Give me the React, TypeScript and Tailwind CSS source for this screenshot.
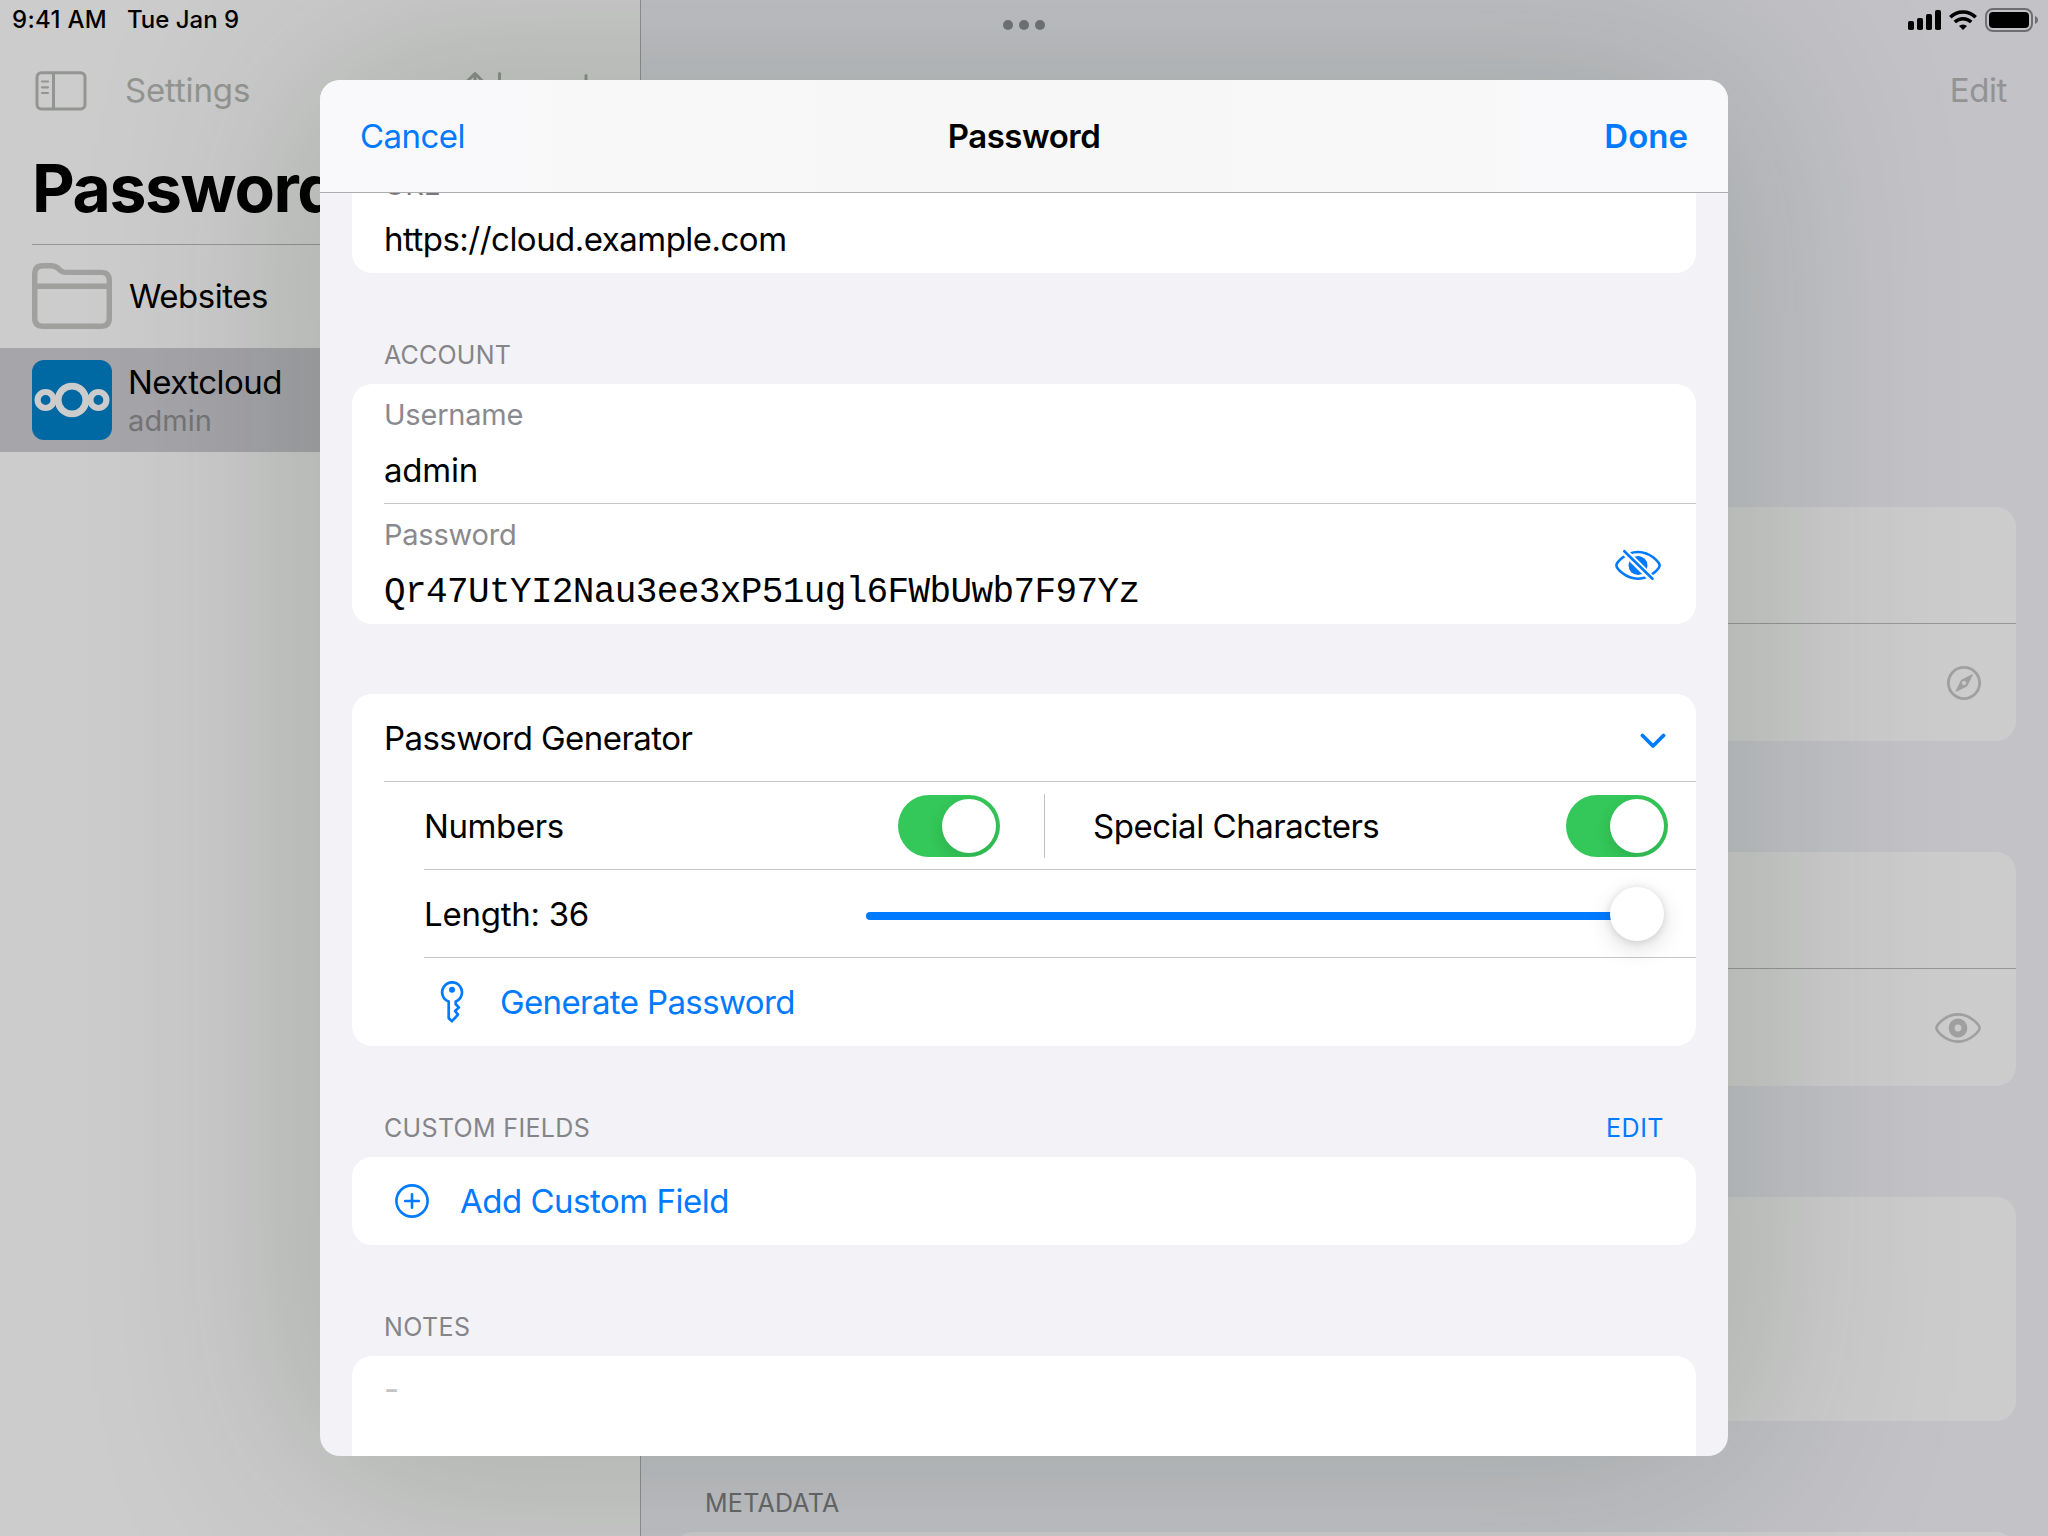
import type { ReactNode } from "react";

/* ---------- icons ---------- */

function SidebarIcon() {
  return (
    <svg width="52" height="40" viewBox="0 0 52 40" fill="none" stroke="#939592" strokeWidth="3">
      <rect x="2" y="1.7" width="48" height="36.4" rx="4.5" />
      <path d="M18.5 2v36" />
      <path d="M7 10.5h6M7 16.3h6M7 22h6" strokeWidth="2.2" strokeLinecap="round" />
    </svg>
  );
}

function SortIcon() {
  return (
    <svg width="44" height="40" viewBox="0 0 44 40" fill="none" stroke="#8e918d" strokeWidth="3" strokeLinecap="round" strokeLinejoin="round">
      <path d="M11 2.5v34M2 11.5l9-9 9 9M35.5 2.5v34M26.5 28l9 9 9-9" />
    </svg>
  );
}

function PlusIcon() {
  return (
    <svg width="36" height="36" viewBox="0 0 36 36" fill="none" stroke="#8e918d" strokeWidth="3" strokeLinecap="round">
      <path d="M18 2.5v31M2.5 18h31" />
    </svg>
  );
}

function FolderIcon() {
  return (
    <svg className="-mt-0.5" width="80" height="66" viewBox="0 0 80 66" fill="none" stroke="#a0a09f" strokeWidth="5.4" strokeLinejoin="round">
      <path d="M2.7 11.5Q2.7 2.7 10.5 2.7H19c4 0 5.5 1 8 3.4l1.6 1.5C30.5 9.2 31.8 9.4 34 9.4H69Q77.3 9.4 77.3 17.5V55Q77.3 63.3 69 63.3H11Q2.7 63.3 2.7 55Z" />
      <path d="M3 23.2H77" />
    </svg>
  );
}

function NextcloudIcon() {
  return (
    <div className="flex h-20 w-20 items-center justify-center rounded-xl bg-[#0069a3]">
      <svg width="80" height="80" viewBox="0 0 80 80" fill="none" stroke="#cccccc">
        <circle cx="40" cy="40" r="13.9" strokeWidth="6.8" />
        <circle cx="13.6" cy="40" r="8" strokeWidth="6.2" />
        <circle cx="66.4" cy="40" r="8" strokeWidth="6.2" />
      </svg>
    </div>
  );
}

function SignalIcon() {
  return (
    <svg width="33" height="20" viewBox="0 0 33 20" fill="#000">
      <rect x="0" y="11" width="6" height="9" rx="1.8" />
      <rect x="9" y="8" width="6" height="12" rx="1.8" />
      <rect x="18" y="4" width="6" height="16" rx="1.8" />
      <rect x="27" y="0" width="6" height="20" rx="1.8" />
    </svg>
  );
}

function WifiIcon() {
  return (
    <svg width="28" height="20" viewBox="0 0 28 20" fill="none" stroke="#000" strokeWidth="3.5">
      <path d="M1.3 7.2A18 18 0 0 1 26.7 7.2" />
      <path d="M5.8 12A11.8 11.8 0 0 1 22.2 12" />
      <path d="M10 16.1A5.6 5.6 0 0 1 18 16.1L14 20Z" fill="#000" stroke="none" />
    </svg>
  );
}

function BatteryIcon() {
  return (
    <svg width="54" height="24" viewBox="0 0 54 24">
      <rect x="1" y="1" width="46" height="22" rx="7" fill="none" stroke="#6f6f72" strokeWidth="2" />
      <rect x="4" y="4" width="40" height="16" rx="4" fill="#000" />
      <path d="M50 8c1.9.7 3 2.2 3 4s-1.1 3.3-3 4Z" fill="#6f6f72" />
    </svg>
  );
}

function CompassIcon() {
  return (
    <svg width="34" height="34" viewBox="0 0 34 34" fill="none">
      <circle cx="17" cy="17" r="15.6" stroke="#a0a0a0" strokeWidth="2.8" />
      <path fillRule="evenodd" fill="#a0a0a0" d="M25.2 8.3q1-.3.6.7L20.6 19.6q-.4.7-1 1.1L9.2 25.7q-.9.3-.6-.6L13.8 14.4q.4-.7 1-1ZM17 15a2 2 0 1 0 0 4a2 2 0 1 0 0-4Z" />
    </svg>
  );
}

function EyeIcon() {
  return (
    <svg width="46" height="30" viewBox="0 0 46 30" fill="none">
      <path d="M1.4 15C1.4 12.5 10 1.4 23 1.4S44.6 12.5 44.6 15 36 28.6 23 28.6 1.4 17.5 1.4 15Z" stroke="#a0a0a0" strokeWidth="2.6" />
      <circle cx="23" cy="15" r="6.4" stroke="#a0a0a0" strokeWidth="6" />
    </svg>
  );
}

function EyeSlashIcon() {
  return (
    <svg className="mt-px" width="46" height="32" viewBox="0 0 46 32" fill="none">
      <path d="M1.4 16.5C1.4 14 10 3 23 3S44.6 14 44.6 16.5 36 29.8 23 29.8 1.4 19 1.4 16.5Z" stroke="#007aff" strokeWidth="2.6" />
      <circle cx="23" cy="16.5" r="9.5" fill="#007aff" />
      <path d="M8.5 1.5L37.5 30.5" stroke="#fff" strokeWidth="7" />
      <path d="M9.3 2.2L37.5 29.8" stroke="#007aff" strokeWidth="2.6" strokeLinecap="round" />
    </svg>
  );
}

function ChevronDownIcon() {
  return (
    <svg className="mt-1.5" width="26" height="16" viewBox="0 0 26 16" fill="none" stroke="#007aff" strokeWidth="3.8" strokeLinecap="round" strokeLinejoin="round">
      <path d="M2.5 2.5L13 13L23.5 2.5" />
    </svg>
  );
}

function KeyIcon() {
  return (
    <svg width="24" height="44" viewBox="0 0 24 44" fill="none" stroke="#007aff" strokeWidth="2.7" strokeLinejoin="round">
      <path d="M8.7 21.6A9.9 9.9 0 1 1 15.7 21.5V24.3L18.9 27.4L15.1 31L18 34.6L12 41.2L8.7 38.2Z" />
      <circle cx="12" cy="9.7" r="3" fill="#007aff" stroke="none" />
    </svg>
  );
}

function PlusCircleIcon() {
  return (
    <svg width="34" height="34" viewBox="0 0 34 34" fill="none" stroke="#007aff" strokeWidth="2.6" strokeLinecap="round">
      <circle cx="17" cy="17" r="15.6" />
      <path d="M17 10.2v13.6M10.2 17h13.6" />
    </svg>
  );
}

/* ---------- background: status bar, list, details ---------- */

function StatusBar() {
  return (
    <div className="absolute inset-x-0 top-0 flex h-10 items-center pl-3 pr-[9px] text-[24px] font-medium">
      <span className="tracking-[0.3px]">9:41 AM</span>
      <span className="ml-5">Tue Jan 9</span>
      <div className="absolute left-1/2 top-5 flex -translate-x-1/2 gap-1.5">
        <i className="size-2.5 rounded-full bg-[#737577]" />
        <i className="size-2.5 rounded-full bg-[#737577]" />
        <i className="size-2.5 rounded-full bg-[#737577]" />
      </div>
      <div className="ml-auto flex items-center gap-2">
        <SignalIcon />
        <WifiIcon />
        <BatteryIcon />
      </div>
    </div>
  );
}

function Sidebar() {
  return (
    <aside className="flex w-[641px] shrink-0 flex-col border-r border-[#8f9291] bg-[#cccccc]">
      <div className="mt-[51px] flex h-20 items-center pl-[35px] pr-9">
        <SidebarIcon />
        <span className="ml-[38px] text-[33px] tracking-[-0.15px] text-[#939592]">Settings</span>
        <div className="ml-auto flex items-center gap-[60px]">
          <SortIcon />
          <PlusIcon />
        </div>
      </div>
      <div className="ml-8 flex h-[114px] items-center border-b border-[#959795] pt-0.5 text-[66px] font-bold tracking-[-1.4px]">Passwords</div>
      <div className="flex h-[103px] items-center pl-8">
        <FolderIcon />
        <span className="ml-[17px] text-[33px] tracking-[-0.5px]">Websites</span>
      </div>
      <div className="flex h-[104px] items-center bg-[#a6a5aa] pl-8">
        <NextcloudIcon />
        <div className="ml-4 pt-0.5">
          <div className="h-10 text-[33px] leading-10 tracking-[-0.55px]">Nextcloud</div>
          <div className="h-[38px] text-[29px] leading-[38px] tracking-[0.1px] text-[#757578]">admin</div>
        </div>
      </div>
    </aside>
  );
}

function DetailCard({ height, icon }: { height: string; icon?: ReactNode }) {
  return (
    <div className={`flex shrink-0 flex-col rounded-[20px] bg-[#cccccc] ${height}`}>
      {icon && (
        <>
          <div className="ml-8 h-[117px] shrink-0 border-b border-[#97979a]" />
          <div className="flex flex-1 items-center justify-end pr-[35px]">{icon}</div>
        </>
      )}
    </div>
  );
}

function Detail() {
  return (
    <main className="flex flex-1 flex-col bg-[#c2c2c7]">
      <div className="mt-[51px] flex h-20 shrink-0 items-center justify-end pr-[41px] text-[33px] tracking-[-0.4px] text-[#939396]">Edit</div>
      <div className="mx-8 mt-[376px] flex shrink-0 flex-col">
        <DetailCard height="h-[234px]" icon={<CompassIcon />} />
        <div className="h-[111px] shrink-0" />
        <DetailCard height="h-[234px]" icon={<EyeIcon />} />
        <div className="h-[111px] shrink-0" />
        <DetailCard height="h-[224px]" />
        <div className="flex h-[111px] shrink-0 flex-col justify-end pb-3 pl-8 text-[25px] leading-[34px] tracking-[0.26px] text-[#68686b]">METADATA</div>
        <DetailCard height="h-[100px]" />
      </div>
    </main>
  );
}

/* ---------- modal ---------- */

function Toggle() {
  return (
    <div className="flex h-[62px] w-[102px] items-center justify-end overflow-hidden rounded-full bg-[#34c759] pr-1">
      <div className="size-[54px] rounded-full bg-white shadow-[0_6px_16px_rgba(0,0,0,0.12)]" />
    </div>
  );
}

function SectionHeader({ title, action, spacing = "tracking-[0.2px]" }: { title: string; action?: string; spacing?: string }) {
  return (
    <div className="flex h-[111px] shrink-0 items-end justify-between px-8 pb-3 text-[25px] leading-[34px] text-[#858589]">
      <span className={spacing}>{title}</span>
      {action && <span className="tracking-[0.5px] text-[#007aff]">{action}</span>}
    </div>
  );
}

function Field({
  label,
  children,
  className = "",
  labelClass = "pt-0 text-[#8a8a8e]",
}: {
  label: string;
  children: ReactNode;
  className?: string;
  labelClass?: string;
}) {
  return (
    <div className={`flex h-[120px] flex-1 flex-col pt-3 ${className}`}>
      <div className={`h-[38px] text-[29px] leading-[38px] tracking-[-0.22px] ${labelClass}`}>{label}</div>
      <div className="mt-4 h-10 leading-10">{children}</div>
    </div>
  );
}

function Card({ children, className = "" }: { children?: ReactNode; className?: string }) {
  return <section className={`shrink-0 rounded-[20px] bg-white ${className}`}>{children}</section>;
}

function Modal() {
  return (
    <div className="absolute inset-0 flex items-center justify-center">
      <div className="flex h-[1376px] w-[1408px] flex-col overflow-hidden rounded-[20px] bg-[#f2f2f7] text-[33px] shadow-[0_0_220px_20px_rgba(5,32,8,0.18)]">
        <header className="grid h-[113px] shrink-0 grid-cols-3 items-center border-b border-[#adadb0] bg-linear-to-r from-[#f9f9fb] via-[#f7f7f7] to-[#f9f9fb] px-10 pt-0.5">
          <span className="tracking-[-0.55px] text-[#007aff]">Cancel</span>
          <span className="text-center font-semibold tracking-[-0.47px]">Password</span>
          <span className="text-right font-semibold text-[#007aff]">Done</span>
        </header>

        <div className="flex min-h-0 flex-1 flex-col overflow-hidden px-8">
          <Card className="-mt-10 flex px-8">
            <Field label="URL" labelClass="pt-px text-[#77777c]">
              <span className="tracking-[-0.52px]">https://cloud.example.com</span>
            </Field>
          </Card>

          <SectionHeader title="ACCOUNT" />
          <Card className="pl-8">
            <Field label="Username" className="border-b border-[#c6c6c8]">
              <span className="tracking-[-0.2px]">admin</span>
            </Field>
            <div className="flex items-center pr-[35px]">
              <Field label="Password">
                <span className="font-['Liberation_Mono',monospace] text-[36px] tracking-[-0.62px]">Qr47UtYI2Nau3ee3xP51ugl6FWbUwb7F97Yz</span>
              </Field>
              <EyeSlashIcon />
            </div>
          </Card>

          <Card className="mt-[70px] h-[352px]">
            <div className="ml-8 flex h-[88px] items-center justify-between border-b border-[#c6c6c8] pr-[30px]">
              <span className="mt-0.5 tracking-[-0.55px]">Password Generator</span>
              <ChevronDownIcon />
            </div>
            <div className="ml-[72px] flex h-[88px] items-center border-b border-[#c6c6c8] pr-7">
              <div className="flex w-[620px] items-center justify-between pr-11">
                <span className="mt-0.5 tracking-[-0.4px]">Numbers</span>
                <Toggle />
              </div>
              <div className="h-16 w-px bg-[#c0c0c2]" />
              <div className="flex flex-1 items-center justify-between pl-12">
                <span className="mt-0.5 tracking-[-0.47px]">Special Characters</span>
                <Toggle />
              </div>
            </div>
            <div className="ml-[72px] flex h-[88px] items-center justify-between border-b border-[#c6c6c8] pr-8">
              <span className="mt-0.5 tracking-[-0.25px]">Length: 36</span>
              <div className="relative flex h-[54px] w-[798px] items-center">
                <div className="mt-[5px] h-2 w-[770px] rounded-full bg-[#007aff]" />
                <div className="absolute right-0 top-0 size-[54px] rounded-full bg-white shadow-[0_8px_24px_rgba(0,0,0,0.13),0_1px_8px_rgba(0,0,0,0.13)]" />
              </div>
            </div>
            <div className="ml-[72px] flex h-[88px] items-center gap-9 pl-4 text-[#007aff]">
              <KeyIcon />
              <span className="mt-0.5 tracking-[-0.62px]">Generate Password</span>
            </div>
          </Card>

          <SectionHeader title="CUSTOM FIELDS" action="EDIT" spacing="tracking-[0.33px]" />
          <Card className="flex h-[88px] items-center gap-8 pl-[43px] text-[#007aff]">
            <PlusCircleIcon />
            <span className="-ml-px mt-0.5 tracking-[-0.5px]">Add Custom Field</span>
          </Card>

          <SectionHeader title="NOTES" spacing="tracking-[0.4px]" />
          <Card className="h-[200px] px-8 pt-[13px] leading-10 text-[#c4c4c6]">-</Card>
        </div>
      </div>
    </div>
  );
}

export default function App() {
  return (
    <div className="relative flex h-[1536px] w-[2048px] overflow-hidden font-['Inter',sans-serif] text-black">
      <Sidebar />
      <Detail />
      <StatusBar />
      <Modal />
    </div>
  );
}
